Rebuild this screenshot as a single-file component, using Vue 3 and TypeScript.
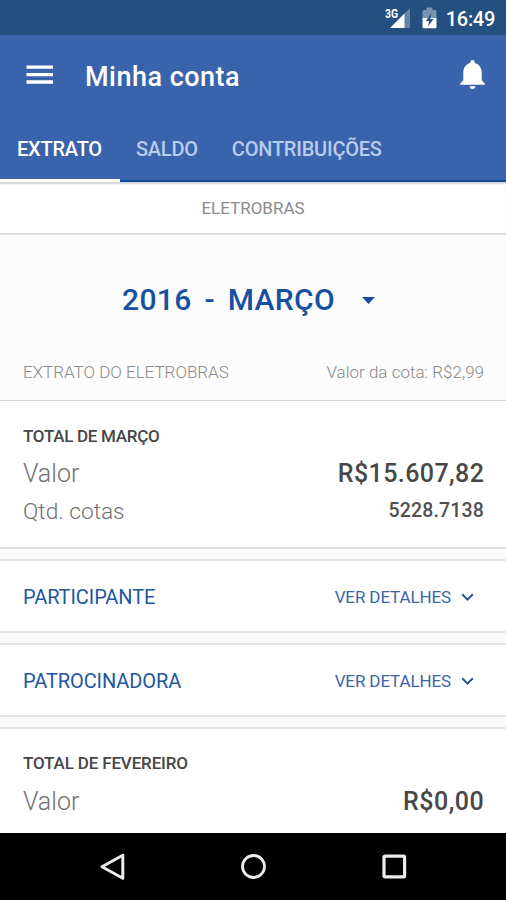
<script setup lang="ts">
import { ref } from 'vue'

interface Group {
  name: string
}

const tabs: string[] = ['EXTRATO', 'SALDO', 'CONTRIBUIÇÕES']
const active = ref(0)
const groups: Group[] = [{ name: 'PARTICIPANTE' }, { name: 'PATROCINADORA' }]
</script>

<template>
  <div class="screen">
    <div class="status">
      <svg class="signal" width="26" height="22" viewBox="0 0 26 22">
        <path d="M25 1V21H5z" fill="#6485a8" />
        <path d="M19.500 6.500V21H5z" fill="#fff" />
        <text x="0" y="10.500" textLength="13" lengthAdjust="spacingAndGlyphs" class="net">3G</text>
      </svg>
      <svg class="battery" width="15" height="22" viewBox="0 0 15 22">
        <path d="M4.500 0.500h6V3H13a1.500 1.500 0 0 1 1.500 1.500V11H0.500V4.500A1.500 1.500 0 0 1 2 3h2.500z" fill="#7894b3" />
        <path d="M0.500 11h14v9a1.300 1.300 0 0 1-1.300 1.300H1.800A1.300 1.300 0 0 1 .5 20z" fill="#fff" />
        <path d="M9.500 6L3.800 14h3.400l-1.200 5.500L11.500 12H8.200z" fill="#24507f" />
      </svg>
      <span class="clock">16:49</span>
    </div>

    <header class="header">
      <div class="toolbar">
        <svg class="menu" width="27" height="20" viewBox="0 0 27 20">
          <path d="M0.500 2.200h26.500M0.500 9.600h26.500M0.500 17h26.500" stroke="#fff" stroke-width="3.300" />
        </svg>
        <h1 class="title">Minha conta</h1>
        <svg class="bell" width="25" height="29" viewBox="0 0 25 29">
          <path d="M12.500 0a2.200 2.200 0 0 1 2.200 2.200v.8c4.600 1.100 7 4.900 7 9.500v7.700l3.100 3.200v1.400H.2v-1.400l3.100-3.200v-7.700c0-4.600 2.400-8.400 7-9.500v-.8A2.200 2.200 0 0 1 12.500 0zM9.700 26.200h5.600a2.800 2.800 0 0 1-5.600 0z" fill="#fff" />
        </svg>
      </div>
      <nav class="tabs">
        <button
          v-for="(tab, i) in tabs"
          :key="tab"
          class="tab"
          :class="{ active: i === active }"
          @click="active = i"
        >
          {{ tab }}
        </button>
      </nav>
    </header>

    <div class="company"><span>ELETROBRAS</span></div>

    <section class="period">
      <div class="month">
        <span>2016 - MARÇO</span>
        <svg class="caret" width="13" height="7" viewBox="0 0 13 7"><path d="M0 0h13L6.500 7z" fill="#1750a0" /></svg>
      </div>
      <div class="caption">
        <span class="cap-left">EXTRATO DO ELETROBRAS</span>
        <span class="cap-right">Valor da cota: R$2,99</span>
      </div>
    </section>

    <section class="card total">
      <h2 class="heading">TOTAL DE MARÇO</h2>
      <div class="row">
        <span class="label">Valor</span>
        <span class="amount">R$15.607,82</span>
      </div>
      <div class="row">
        <span class="label quotas">Qtd. cotas</span>
        <span class="quantity">5228.7138</span>
      </div>
    </section>

    <section v-for="group in groups" :key="group.name" class="card group">
      <span class="group-name">{{ group.name }}</span>
      <span class="details">VER DETALHES</span>
      <svg class="chevron" width="13" height="9" viewBox="0 0 13 9">
        <path d="M1.200 1.300L6.500 6.600L11.800 1.300" fill="none" stroke="#24559f" stroke-width="2" />
      </svg>
    </section>

    <section class="card last">
      <h2 class="heading feb">TOTAL DE FEVEREIRO</h2>
      <div class="row">
        <span class="label">Valor</span>
        <span class="amount zero">R$0,00</span>
      </div>
    </section>

    <footer class="navbar">
      <svg width="26" height="28" viewBox="0 0 26 28">
        <path d="M23.800 2.300V25.200L3 13.700z" fill="none" stroke="#ececec" stroke-width="3" stroke-linejoin="round" />
      </svg>
      <svg width="26" height="28" viewBox="0 0 26 28">
        <circle cx="13.500" cy="13.500" r="11" fill="none" stroke="#ececec" stroke-width="2.800" />
      </svg>
      <svg width="26" height="28" viewBox="0 0 26 28">
        <rect x="3" y="3.200" width="20.600" height="20.600" rx="1" fill="none" stroke="#ececec" stroke-width="3.200" />
      </svg>
    </footer>
  </div>
</template>

<style>
body {
  margin: 0;
  background: #fcfcfc;
}
</style>

<style scoped>
.screen {
  width: 506px;
  height: 900px;
  display: flex;
  flex-direction: column;
  overflow: hidden;
  background: #fbfbfb;
  font-family: Roboto, 'Liberation Sans', sans-serif;
  white-space: nowrap;
}
.screen * {
  box-sizing: border-box;
}
.status {
  flex: none;
  height: 35px;
  display: flex;
  align-items: flex-start;
  justify-content: flex-end;
  padding: 7px 11px 0 0;
  background: #24507f;
  color: #fff;
}
.net {
  font: 700 12px Roboto, sans-serif;
  fill: #fff;
  stroke: #24507f;
  stroke-width: 2px;
  paint-order: stroke;
}
.signal {
  margin-right: 11px;
}
.battery {
  margin-right: 9px;
}
.clock {
  font-size: 20px;
  font-weight: 500;
  line-height: 24px;
  letter-spacing: -0.300px;
}
.header {
  flex: none;
  height: 147px;
  background: #3963ab;
  border-bottom: 2px solid #154c9e;
  color: #fff;
}
.toolbar {
  height: 79px;
  display: flex;
  align-items: center;
  padding: 0 21px 0 26px;
}
.title {
  flex: 1;
  margin: 4px 0 0 32px;
  font-size: 27px;
  font-weight: 500;
  line-height: 32px;
  letter-spacing: 0.480px;
}
.tabs {
  display: flex;
  height: 68px;
}
.tab {
  border: 0;
  border-bottom: 3px solid transparent;
  margin: 0;
  padding: 5px 17px 0;
  height: 68px;
  background: none;
  color: #b9cced;
  font-family: inherit;
  font-size: 20px;
  font-weight: 500;
  line-height: 60px;
  letter-spacing: -0.220px;
}
.tab.active {
  padding-right: 18px;
  margin-right: -1px;
  color: #fff;
  border-bottom-color: #fff;
}
.company {
  flex: none;
  height: 53px;
  display: flex;
  align-items: center;
  justify-content: center;
  background: #fff;
  border-bottom: 2px solid #dcdcdc;
  box-shadow: inset 0 3px 2px -1px #d4d4d4;
  color: #8b8b8b;
  font-size: 17px;
}
.period {
  flex: none;
  height: 166px;
  display: flex;
  flex-direction: column;
  background: #fcfcfc;
  border-bottom: 1px solid #d4d4d4;
}
.month {
  display: flex;
  align-items: center;
  gap: 27px;
  height: 40px;
  margin: 44px 0 0 122px;
  color: #1750a0;
  font-size: 30px;
  font-weight: 500;
  letter-spacing: 0.350px;
  word-spacing: 5px;
}
.caret {
  margin-top: 2px;
}
.caption {
  display: flex;
  justify-content: space-between;
  padding: 0 22px 0 23px;
  margin-top: 43px;
  color: #8a8a8a;
  font-size: 17px;
  font-weight: 300;
  line-height: 20px;
}
.card {
  flex: none;
  background: #fff;
}
.total {
  height: 148px;
  padding: 24px 22px 0 23px;
  border-bottom: 2px solid #e0e0e0;
}
.heading {
  margin: 0 0 8px;
  color: #464646;
  font-size: 17px;
  font-weight: 500;
  line-height: 22px;
  letter-spacing: -0.280px;
}
.feb {
  letter-spacing: -0.160px;
}
.row {
  display: flex;
  align-items: center;
  justify-content: space-between;
  height: 37px;
}
.label {
  color: #707070;
  font-size: 25px;
  font-weight: 300;
}
.quotas {
  margin-top: 2px;
  font-size: 22.700px;
}
.amount {
  margin-right: -0.400px;
  color: #484848;
  font-size: 25px;
  font-weight: 500;
  letter-spacing: 0.420px;
}
.zero {
  letter-spacing: 0.550px;
}
.quantity {
  margin-top: -1px;
  color: #505050;
  font-size: 19.500px;
  font-weight: 500;
  letter-spacing: 0.150px;
}
.group {
  display: flex;
  align-items: center;
  height: 74px;
  margin-top: 10px;
  padding: 2px 32px 0 23px;
  border-top: 2px solid #e4e4e4;
  border-bottom: 2px solid #e4e4e4;
  color: #24559f;
}
.group-name {
  flex: 1;
  font-size: 20px;
  letter-spacing: -0.080px;
}
.details {
  font-size: 17px;
  margin-right: 10px;
  letter-spacing: -0.120px;
  color: #3a66aa;
}
.last {
  flex: 1 0 106px;
  margin-top: 10px;
  padding: 23px 22px 0 23px;
  border-top: 2px solid #e4e4e4;
}
.last .row {
  padding-top: 1px;
}
.navbar {
  flex: none;
  height: 67px;
  display: flex;
  align-items: center;
  justify-content: center;
  gap: 115px;
  background: #000;
}
</style>
